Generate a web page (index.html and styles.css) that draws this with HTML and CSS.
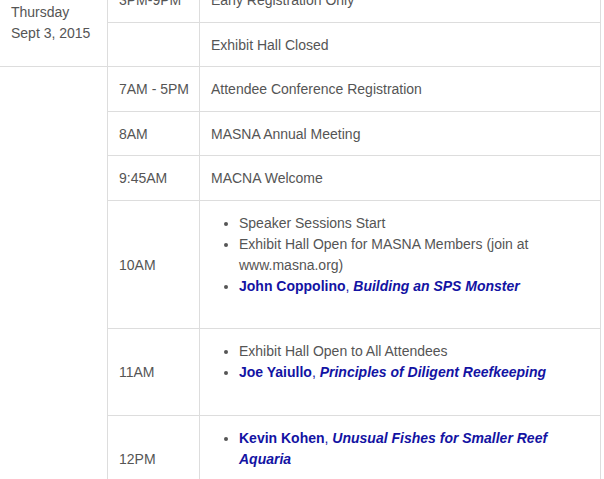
FILE: index.html
```html
<!DOCTYPE html>
<html>
<head>
<meta charset="utf-8">
<link rel="stylesheet" href="styles.css">
</head>
<body>
<div class="wrap">
<table class="schedule">
  <colgroup>
    <col class="c-day">
    <col class="c-time">
    <col class="c-event">
  </colgroup>
  <tbody>
    <tr>
      <td class="day" rowspan="2">Thursday<br>Sept 3, 2015</td>
      <td class="time">3PM-9PM</td>
      <td>Early Registration Only</td>
    </tr>
    <tr>
      <td class="time"></td>
      <td>Exhibit Hall Closed</td>
    </tr>
    <tr>
      <td class="day" rowspan="7"></td>
      <td class="time">7AM - 5PM</td>
      <td>Attendee Conference Registration</td>
    </tr>
    <tr>
      <td class="time">8AM</td>
      <td>MASNA Annual Meeting</td>
    </tr>
    <tr>
      <td class="time">9:45AM</td>
      <td>MACNA Welcome</td>
    </tr>
    <tr>
      <td class="time">10AM</td>
      <td>
        <ul class="items">
          <li>Speaker Sessions Start</li>
          <li>Exhibit Hall Open for MASNA Members (join at www.masna.org)</li>
          <li class="talk"><b>John Coppolino</b>, <b><i>Building an SPS Monster</i></b></li>
        </ul>
      </td>
    </tr>
    <tr>
      <td class="time">11AM</td>
      <td>
        <ul class="items">
          <li>Exhibit Hall Open to All Attendees</li>
          <li class="talk"><b>Joe Yaiullo</b>, <b><i>Principles of Diligent Reefkeeping</i></b></li>
        </ul>
      </td>
    </tr>
    <tr>
      <td class="time">12PM</td>
      <td>
        <ul class="items">
          <li class="talk"><b>Kevin Kohen</b>, <b><i>Unusual Fishes for Smaller Reef Aquaria</i></b></li>
        </ul>
      </td>
    </tr>
    <tr>
      <td class="time">1PM</td>
      <td>Lunch Break</td>
    </tr>
  </tbody>
</table>
</div>
</body>
</html>
```

FILE: styles.css
```css
html, body {
  margin: 0;
  padding: 0;
  background: #fff;
  overflow: hidden;
}

body {
  font-family: "Liberation Sans", Arial, sans-serif;
  font-size: 14px;
  line-height: 21px;
  color: #555;
}

.wrap {
  margin-top: -23px;
  margin-left: -1px;
  width: 602px;
}

.schedule {
  width: 602px;
  border-collapse: collapse;
  table-layout: fixed;
  border: 1px solid #ddd;
}

.c-day { width: 108px; }
.c-time { width: 92px; }

.schedule td {
  border: 1px solid #ddd;
  padding: 12px 11px 10.5px 11px;
  vertical-align: middle;
  text-align: left;
}

.schedule td.time {
  white-space: nowrap;
}

.items {
  margin: 0 0 21px 0;
  padding: 0 0 0 28px;
  list-style: disc;
}

.items li::marker {
  color: #555;
}

.talk {
  color: #1313a3;
}
```
